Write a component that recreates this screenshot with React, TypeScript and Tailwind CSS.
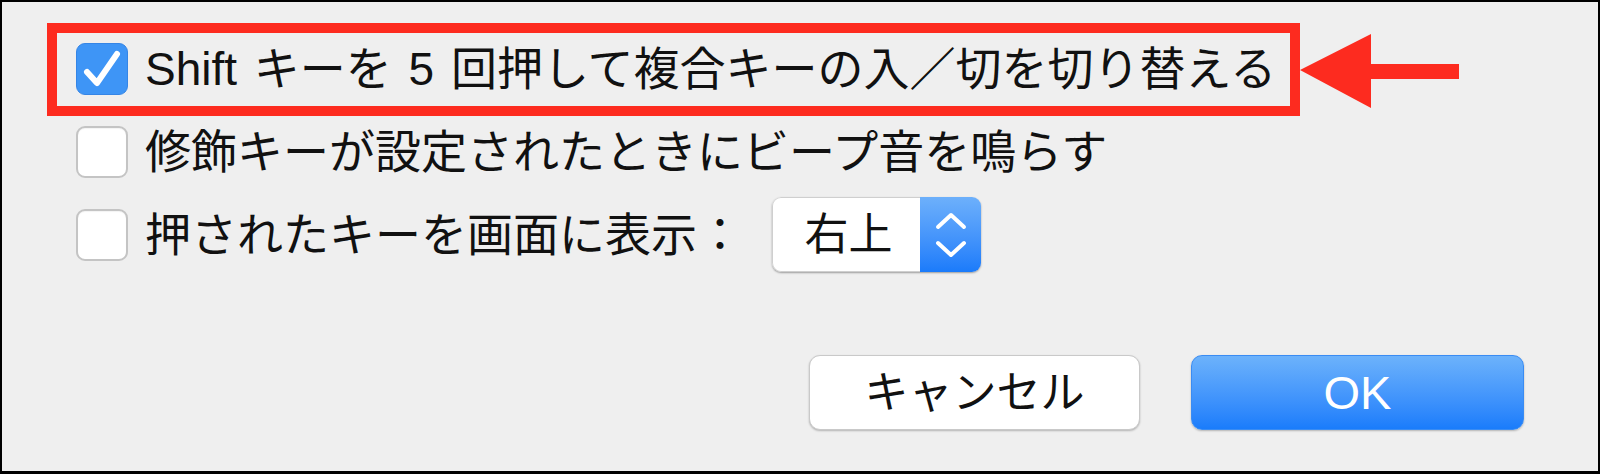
import React from "react";

const FONT = { fontFamily: '"Liberation Sans", "Noto Sans CJK JP", sans-serif' };

function Checkbox({ checked }: { checked?: boolean }) {
  if (checked) {
    return (
      <div className="relative w-[52px] h-[52px] shrink-0 rounded-[9px] bg-[#3e95f6] border border-[#3585e6]">
        <svg width="52" height="52" viewBox="0 0 52 52" className="absolute -left-px -top-px">
          <path d="M11 29 L21 40 L41 11" fill="none" stroke="#ffffff" strokeWidth="6" strokeLinecap="round" strokeLinejoin="round" />
        </svg>
      </div>
    );
  }
  return (
    <div className="w-[52px] h-[52px] shrink-0 rounded-[9px] bg-white border-2 border-[#c4c4c4] shadow-[inset_0_1px_1px_rgba(0,0,0,0.05)]" />
  );
}

export default function App() {
  return (
    <div
      className="relative w-[1600px] h-[474px] bg-[#efefef] border-black border-t-2 border-l-2 border-r-2 border-b-[3px] text-[#111] overflow-hidden"
      style={FONT}
    >
      <div className="flex flex-col pt-[25px] pl-[74px]">
        <div className="flex items-center h-[83px]">
          <Checkbox checked />
          <span className="ml-[17px] text-[46px] leading-none whitespace-nowrap [word-spacing:4px]">
            Shift キーを 5 回押して複合キーの入／切を切り替える
          </span>
        </div>
        <div className="flex items-center h-[83px]">
          <Checkbox />
          <span className="ml-[17px] text-[46px] leading-none whitespace-nowrap">
            修飾キーが設定されたときにビープ音を鳴らす
          </span>
        </div>
        <div className="flex items-center h-[83px]">
          <Checkbox />
          <span className="ml-[17px] text-[46px] leading-none whitespace-nowrap w-[627px]">
            押されたキーを画面に表示：
          </span>
          <div className="flex w-[209px] h-[75px] rounded-[9px] overflow-hidden shadow-[0_1px_2px_rgba(0,0,0,0.35)]">
            <div className="flex-1 flex items-center justify-center bg-white border border-r-0 border-[#cfcfcf] rounded-l-[9px] text-[44px] leading-none pl-[4px]">
              右上
            </div>
            <div className="w-[61px] flex items-center justify-center bg-gradient-to-b from-[#6db0fb] to-[#1a7bfa]">
              <svg width="32" height="46" viewBox="0 0 32 46">
                <path d="M3 15 L16 3 L29 15" fill="none" stroke="#fff" strokeWidth="4" strokeLinecap="round" strokeLinejoin="round" />
                <path d="M3 31 L16 43 L29 31" fill="none" stroke="#fff" strokeWidth="4" strokeLinecap="round" strokeLinejoin="round" />
              </svg>
            </div>
          </div>
        </div>
      </div>

      <div className="flex justify-end gap-[51px] mt-[79px] pr-[74px]">
        <button className="w-[331px] h-[75px] rounded-[11px] bg-white border border-[#c9c9c9] shadow-[0_1px_2px_rgba(0,0,0,0.25)] text-[44px] leading-none text-[#111] flex items-center justify-center">
          キャンセル
        </button>
        <button className="w-[333px] h-[75px] rounded-[11px] bg-gradient-to-b from-[#6cb2fb] to-[#197cfb] border border-[#3a8cf3] shadow-[0_1px_2px_rgba(0,0,0,0.25)] text-[47px] leading-none text-white flex items-center justify-center">
          OK
        </button>
      </div>

      {/* annotation overlay: red box */}
      <div className="absolute left-[45px] top-[21px] w-[1253px] h-[93px] border-[10px] border-[#fd2b1f] pointer-events-none" />
      {/* annotation arrow */}
      <svg className="absolute left-[1296px] top-[28px] pointer-events-none" width="170" height="84" viewBox="0 0 170 84">
        <polygon points="2,40 73,4 73,34 161,34 161,49 73,49 73,78" fill="#fd2b1f" />
      </svg>
    </div>
  );
}
